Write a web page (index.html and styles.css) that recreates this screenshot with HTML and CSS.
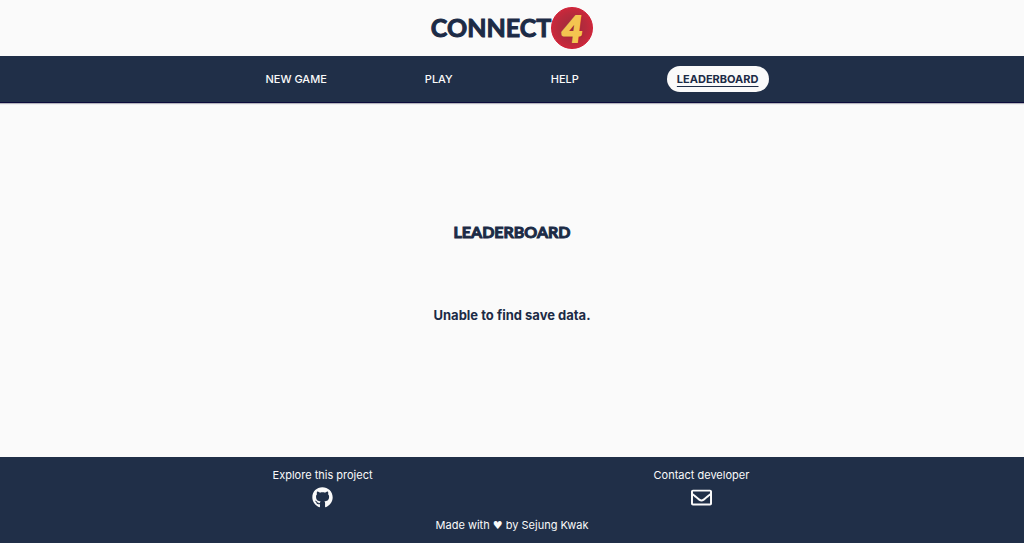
FILE: index.html
```html
<!DOCTYPE html>
<html lang="en">
<head>
<meta charset="utf-8">
<meta name="viewport" content="width=device-width, initial-scale=1">
<title>Connect 4 - Leaderboard</title>
<link rel="stylesheet" href="styles.css">
</head>
<body>
<header class="header">
  <a class="logo" href="#">
    <span class="logo-word">CONNECT</span>
    <span class="logo-disc">4</span>
  </a>
</header>
<nav class="nav">
  <a class="nav-link" href="#">NEW GAME</a>
  <a class="nav-link" href="#">PLAY</a>
  <a class="nav-link" href="#">HELP</a>
  <a class="nav-link active" href="#" aria-current="page">LEADERBOARD</a>
</nav>
<main class="main">
  <h1 class="title">LEADERBOARD</h1>
  <p class="message">Unable to find save data.</p>
</main>
<footer class="footer">
  <div class="footer-links">
    <a class="footer-link" href="#">Explore this project
      <svg class="icon" viewBox="0 0 496 512" aria-hidden="true"><path fill="currentColor" d="M165.900 397.400c0 2-2.300 3.600-5.200 3.600-3.300.3-5.600-1.300-5.600-3.600 0-2 2.300-3.600 5.200-3.600 3-.3 5.600 1.300 5.600 3.600zm-31.100-4.500c-.7 2 1.300 4.300 4.300 4.900 2.600 1 5.600 0 6.200-2s-1.300-4.300-4.300-5.200c-2.600-.7-5.500.3-6.200 2.300zm44.200-1.700c-2.900.7-4.900 2.600-4.600 4.900.3 2 2.900 3.300 5.900 2.600 2.900-.7 4.900-2.600 4.600-4.600-.3-1.900-3-3.200-5.900-2.900zM244.800 8C106.100 8 0 113.300 0 252c0 110.900 69.800 205.800 169.500 239.200 12.800 2.300 17.300-5.600 17.300-12.100 0-6.200-.3-40.400-.3-61.400 0 0-70 15-84.700-29.800 0 0-11.400-29.100-27.800-36.600 0 0-22.900-15.700 1.600-15.400 0 0 24.900 2 38.600 25.800 21.900 38.600 58.600 27.500 72.900 20.900 2.300-16 8.800-27.100 16-33.700-55.900-6.200-112.300-14.300-112.300-110.500 0-27.500 7.600-41.300 23.600-58.900-2.600-6.500-11.100-33.300 2.600-67.900 20.900-6.500 69 27 69 27 20-5.600 41.500-8.500 62.800-8.500s42.800 2.900 62.800 8.500c0 0 48.100-33.600 69-27 13.700 34.700 5.200 61.400 2.600 67.900 16 17.700 25.800 31.500 25.800 58.900 0 96.500-58.900 104.200-114.800 110.500 9.200 7.900 17 22.900 17 46.400 0 33.700-.3 75.400-.3 83.600 0 6.500 4.600 14.400 17.300 12.100C428.200 457.800 496 362.900 496 252 496 113.300 383.500 8 244.800 8z"/></svg>
    </a>
    <a class="footer-link" href="#">Contact developer
      <svg class="icon" viewBox="0 0 512 512" aria-hidden="true"><path fill="currentColor" d="M464 64H48C21.490 64 0 85.490 0 112v288c0 26.510 21.490 48 48 48h416c26.510 0 48-21.490 48-48V112c0-26.510-21.490-48-48-48zm0 48v40.805c-22.422 18.259-58.168 46.651-134.587 106.490-16.841 13.247-50.201 45.072-73.413 44.701-23.208.375-56.579-31.459-73.413-44.701C106.180 199.465 70.425 171.067 48 152.805V112h416zM48 400V214.398c22.914 18.251 55.409 43.862 104.938 82.646 21.857 17.205 60.134 55.186 103.062 54.955 42.717.231 80.509-37.199 103.053-54.947 49.528-38.783 82.032-64.401 104.947-82.653V400H48z"/></svg>
    </a>
  </div>
  <p class="credit">Made with <span class="heart">♥</span> by Sejung Kwak</p>
</footer>
</body>
</html>
```
FILE: styles.css
```css
* { box-sizing: border-box; margin: 0; padding: 0; }

body {
  min-height: 100vh;
  display: flex;
  flex-direction: column;
  background: #fafafa;
  color: #1c2b46;
  font-family: Inter, "Open Sans", sans-serif;
}

a { color: inherit; text-decoration: none; }

.header {
  display: flex;
  justify-content: center;
  padding: 7px 0;
}

.logo { display: flex; align-items: center; }

.logo-word {
  font: 700 25px/40px Lato, sans-serif;
  -webkit-text-stroke: 1px #1c2b46;
  padding-bottom: 2px;
}

.logo-disc {
  width: 42px;
  border: 1px solid #d01c34;
  border-radius: 50%;
  background: radial-gradient(#9e2b3c, #b82a3c 50%, #c9283b 70%);
  color: #f4c550;
  font: italic 700 37px/40px Lato, sans-serif;
  text-align: center;
  -webkit-text-stroke: 2px #f4c550;
  text-shadow: 1px 1px 1px #7a2030;
}

.nav {
  display: flex;
  justify-content: center;
  gap: 78px;
  padding: 10px 0;
  background: #202f48;
  border-bottom: 1px solid #0c0c3c;
  box-shadow: 0 1px 1px #b5b5bd;
}

.nav-link {
  padding: 0 10px;
  border-radius: 13px;
  color: #fafafa;
  font-size: 11px;
  font-weight: 500;
  line-height: 26px;
}

.active {
  background: #fafafa;
  color: #1c2b46;
  font-weight: 700;
  text-decoration: underline 1px;
  text-underline-offset: 3px;
}

.main {
  flex: 1;
  display: flex;
  flex-direction: column;
  align-items: center;
  justify-content: center;
  gap: 61px;
  padding-bottom: 15px;
}

.title {
  font: 700 16px/24px Lato, sans-serif;
  -webkit-text-stroke: 1px #1c2b46;
}

.message { font-size: 13px; font-weight: 700; line-height: 20px; }

.footer {
  padding: 10px 0 9px;
  background: #202f48;
  color: #fafafa;
  font-size: 11px;
  line-height: 16px;
}

.footer-links {
  display: grid;
  grid-template-columns: 1fr 1fr;
  width: 74%;
  margin: 0 auto;
}

.footer-link {
  display: flex;
  flex-direction: column;
  align-items: center;
  gap: 4px;
}

.icon { width: 21px; height: 21px; }

.credit { margin-top: 9px; text-align: center; }

.heart { font-family: "DejaVu Sans", sans-serif; }
```
